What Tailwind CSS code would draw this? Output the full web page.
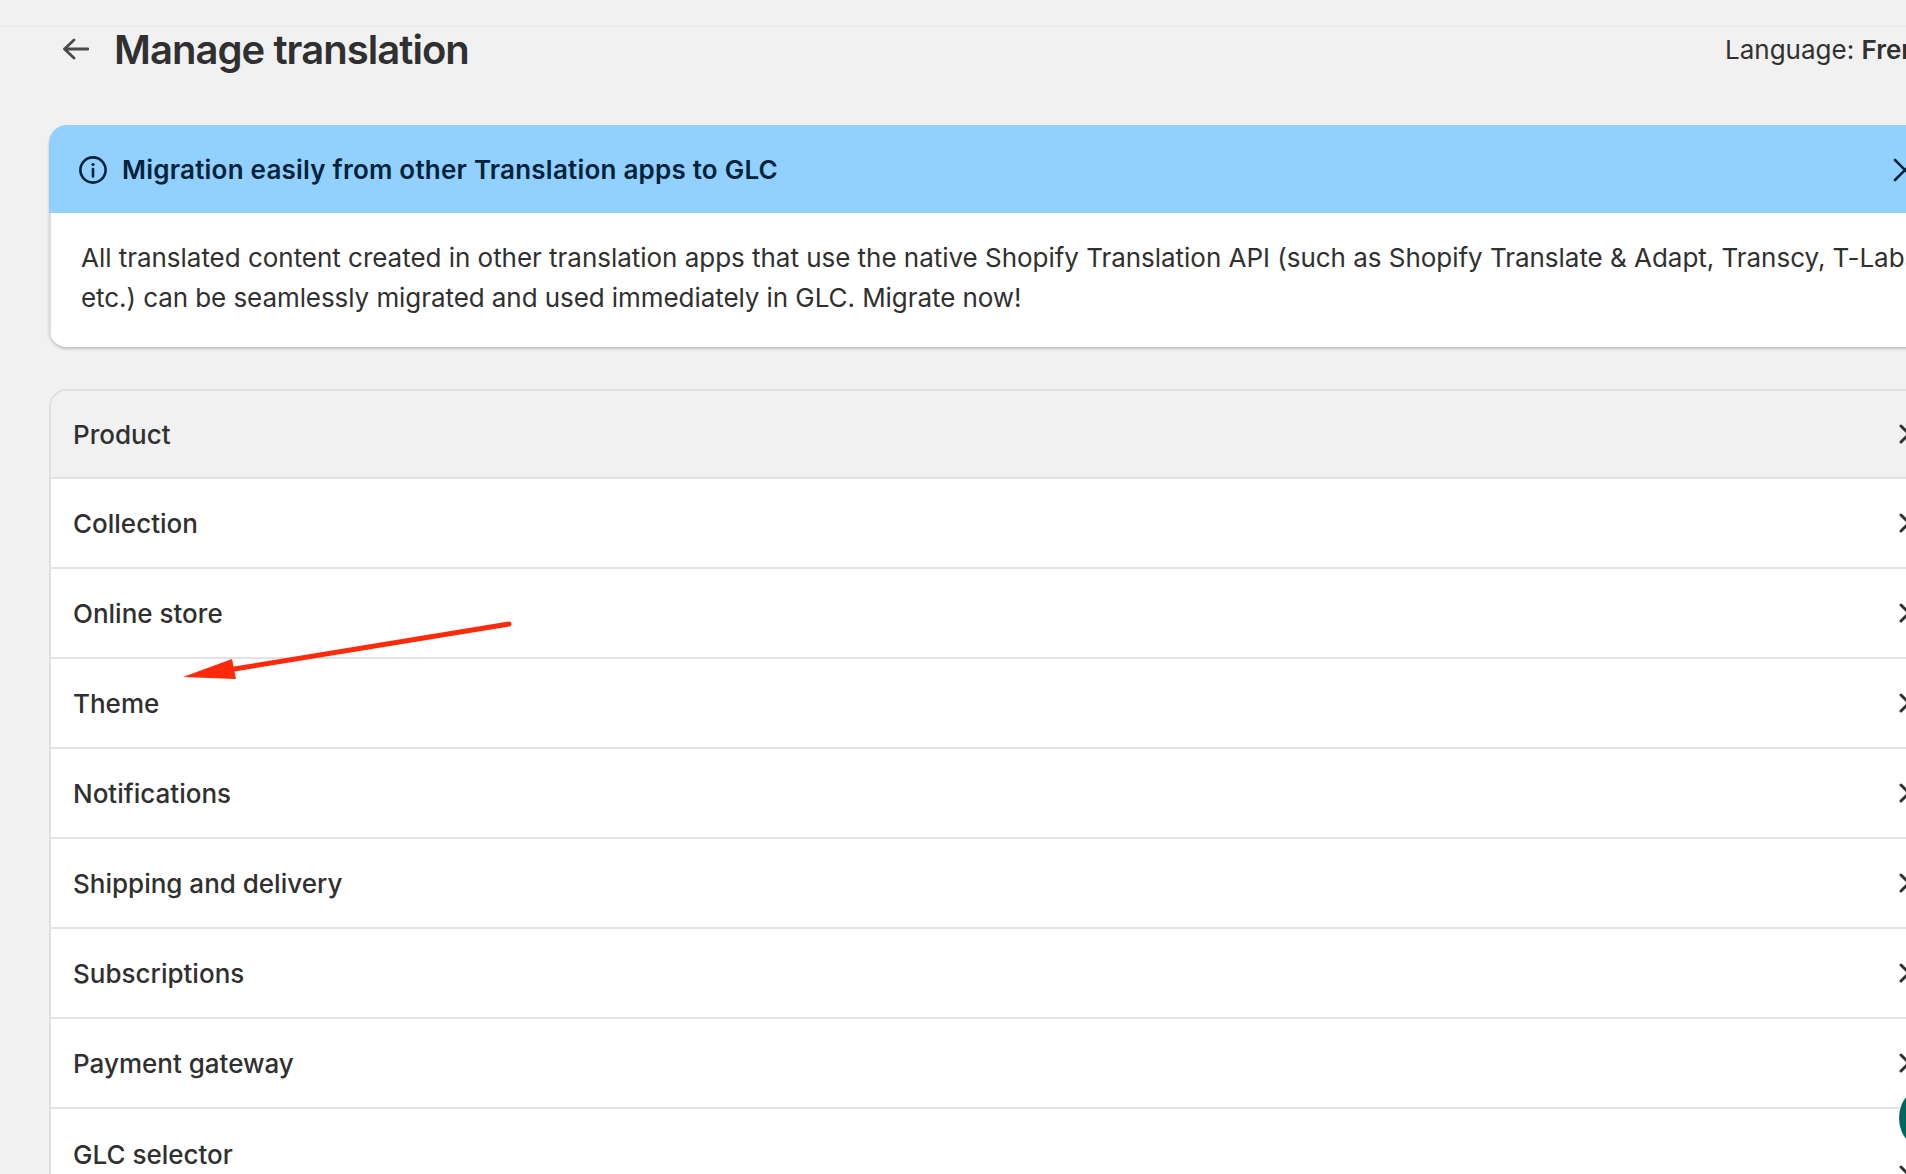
<!doctype html>
<html><head><meta charset="utf-8"><script src="https://cdn.jsdelivr.net/npm/@tailwindcss/browser@4"></script></head>
<body class="m-0">
<div class="relative h-[1174px] w-[1906px] overflow-hidden bg-[#f1f1f1] font-['Inter',sans-serif] text-[#303030]">
  <div class="h-[27px] border-b-2 border-[#ebebeb]"></div>
  <div class="flex h-[98px] items-start justify-between pl-[63px]">
    <div class="flex items-center">
      <svg class="mt-[-2px] h-[26px] w-[26px] text-[#4a4a4a]" viewBox="0 0 26 26" fill="none" stroke="currentColor" stroke-width="2.8" stroke-linecap="round" stroke-linejoin="round"><path d="M1.5 13H25M11 4L1.5 13L11 22"/></svg>
      <h1 class="ml-[25px] text-[40px] leading-[46px] font-semibold tracking-[-0.95px] whitespace-nowrap">Manage translation</h1>
    </div>
    <div class="mt-[7px] w-[181px] text-[26px] leading-[32px] whitespace-nowrap">Language: <b class="font-semibold">French</b></div>
  </div>
  <div class="ml-[49px] w-[1890px]">
    <section class="overflow-hidden rounded-[18px] bg-white shadow-[0_2px_3px_rgba(0,0,0,0.2)]">
      <div class="flex h-[88px] items-center justify-between bg-[#91d0ff] pt-[2px] pl-[29px] pr-[22px] text-[#00233a]">
        <div class="flex items-center">
          <svg class="h-[30px] w-[30px]" viewBox="0 0 30 30" fill="none" stroke="currentColor" stroke-width="2.6" stroke-linecap="round"><circle cx="15" cy="15" r="12.6"/><path d="M15 14v7.5"/><circle cx="15" cy="9.5" r="1.6" fill="currentColor" stroke="none"/></svg>
          <span class="ml-[14px] text-[26px] leading-[32px] font-semibold tracking-[0.22px] whitespace-nowrap">Migration easily from other Translation apps to GLC</span>
        </div>
        <svg class="h-[24px] w-[24px]" viewBox="0 0 24 24" fill="none" stroke="currentColor" stroke-width="2.6" stroke-linecap="round"><path d="M2 2L22 22M22 2L2 22"/></svg>
      </div>
      <div class="h-[134px] pl-[32px] pt-[25px] text-[26px] leading-[40px] tracking-[-0.07px] whitespace-nowrap shadow-[inset_2px_0_0_#dcdcdc]"><span class="tracking-[-0.03px]">All translated content created in other translation apps that use the native Shopify Translation API (such as Shopify Translate &amp; Adapt, Transcy, T-Labs, Langify, Weglot,</span><br>etc.) can be seamlessly migrated and used immediately in GLC. Migrate now!</div>
    </section>
    <div class="mt-[42px] rounded-tl-[18px] border-t-2 border-l-2 border-[#e0e0e0] bg-white text-[26px] font-medium">
      <div class="flex h-[88px] items-center justify-between rounded-tl-[16px] border-b-2 border-[#e3e3e3] bg-[#f1f1f1] pl-[22px] pr-[26px]"><span>Product</span><svg class="h-[24px] w-[14px]" viewBox="0 0 14 24" fill="none" stroke="currentColor" stroke-width="3" stroke-linecap="round" stroke-linejoin="round"><path d="M2 4L10 12L2 20"/></svg></div>
      <div class="flex h-[90px] items-center justify-between border-b-2 border-[#e3e3e3] pl-[22px] pr-[26px]"><span>Collection</span><svg class="h-[24px] w-[14px]" viewBox="0 0 14 24" fill="none" stroke="currentColor" stroke-width="3" stroke-linecap="round" stroke-linejoin="round"><path d="M2 4L10 12L2 20"/></svg></div>
      <div class="flex h-[90px] items-center justify-between border-b-2 border-[#e3e3e3] pl-[22px] pr-[26px]"><span>Online store</span><svg class="h-[24px] w-[14px]" viewBox="0 0 14 24" fill="none" stroke="currentColor" stroke-width="3" stroke-linecap="round" stroke-linejoin="round"><path d="M2 4L10 12L2 20"/></svg></div>
      <div class="flex h-[90px] items-center justify-between border-b-2 border-[#e3e3e3] pl-[22px] pr-[26px]"><span>Theme</span><svg class="h-[24px] w-[14px]" viewBox="0 0 14 24" fill="none" stroke="currentColor" stroke-width="3" stroke-linecap="round" stroke-linejoin="round"><path d="M2 4L10 12L2 20"/></svg></div>
      <div class="flex h-[90px] items-center justify-between border-b-2 border-[#e3e3e3] pl-[22px] pr-[26px]"><span>Notifications</span><svg class="h-[24px] w-[14px]" viewBox="0 0 14 24" fill="none" stroke="currentColor" stroke-width="3" stroke-linecap="round" stroke-linejoin="round"><path d="M2 4L10 12L2 20"/></svg></div>
      <div class="flex h-[90px] items-center justify-between border-b-2 border-[#e3e3e3] pl-[22px] pr-[26px]"><span>Shipping and delivery</span><svg class="h-[24px] w-[14px]" viewBox="0 0 14 24" fill="none" stroke="currentColor" stroke-width="3" stroke-linecap="round" stroke-linejoin="round"><path d="M2 4L10 12L2 20"/></svg></div>
      <div class="flex h-[90px] items-center justify-between border-b-2 border-[#e3e3e3] pl-[22px] pr-[26px]"><span>Subscriptions</span><svg class="h-[24px] w-[14px]" viewBox="0 0 14 24" fill="none" stroke="currentColor" stroke-width="3" stroke-linecap="round" stroke-linejoin="round"><path d="M2 4L10 12L2 20"/></svg></div>
      <div class="flex h-[90px] items-center justify-between border-b-2 border-[#e3e3e3] pl-[22px] pr-[26px]"><span>Payment gateway</span><svg class="h-[24px] w-[14px]" viewBox="0 0 14 24" fill="none" stroke="currentColor" stroke-width="3" stroke-linecap="round" stroke-linejoin="round"><path d="M2 4L10 12L2 20"/></svg></div>
      <div class="flex h-[90px] items-center justify-between pl-[22px] pr-[26px]"><span>GLC selector</span><svg class="mt-[42px] h-[24px] w-[14px]" viewBox="0 0 14 24" fill="none" stroke="currentColor" stroke-width="3" stroke-linecap="round" stroke-linejoin="round"><path d="M2 4L10 12L2 20"/></svg></div>
    </div>
  </div>
  <svg class="absolute left-0 top-0 h-[1174px] w-[1906px]" viewBox="0 0 1906 1174" fill="none"><path d="M509 624L228 670" stroke="#ff2a0a" stroke-width="5" stroke-linecap="round"/><path d="M183 677L232 659L236 679Z" fill="#ff2a0a"/></svg>
  <div class="absolute left-[1899px] top-[1083px] h-[70px] w-[70px] rounded-full bg-[#00655f]"></div>
</div>
</body></html>
